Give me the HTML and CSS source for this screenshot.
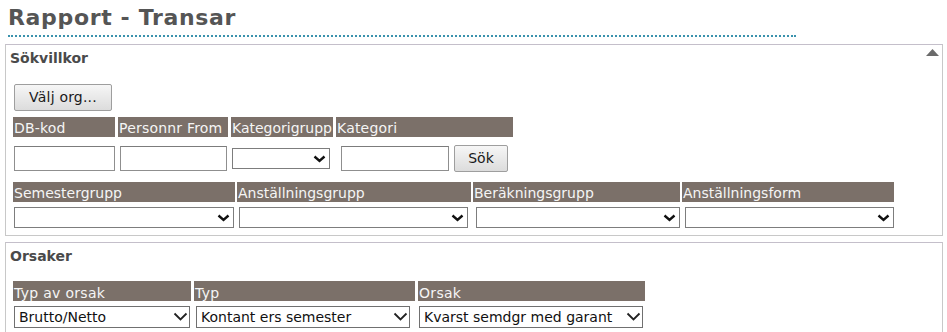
FILE: index.html
```html
<!DOCTYPE html>
<html lang="sv">
<head>
<meta charset="utf-8">
<title>Rapport - Transar</title>
<link rel="stylesheet" href="styles.css">
</head>
<body>
<h1 class="page-title">Rapport - Transar</h1>

<section class="panel panel-search">
  <div class="legend">Sökvillkor</div>
  <span class="collapse" aria-label="Fäll ihop">
    <svg width="13" height="7" viewBox="0 0 13 7"><polygon points="0,7 6.5,0 13,7" fill="#6b6b6b"/></svg>
  </span>
  <button class="btn btn-org" type="button">Välj org...</button>

  <div class="row hd-row r1">
    <div class="hd hd-wide c1a">DB-kod</div>
    <div class="hd hd-wide c1b">Personnr From</div>
    <div class="hd c1c">Kategorigrupp</div>
    <div class="hd hd-wide c1d">Kategori</div>
  </div>
  <div class="row in-row r1">
    <div class="cell c1a"><input class="txt w-db" type="text"></div>
    <div class="cell c1b"><input class="txt w-pnr" type="text"></div>
    <div class="cell c1c"><span class="sel w-kg"><select></select><svg class="chev" width="13" height="8" viewBox="0 0 13 8"><polyline points="1.5,1.5 6.5,6 11.5,1.5" fill="none" stroke="#111" stroke-width="2.4"/></svg></span></div>
    <div class="cell c1d"><input class="txt w-kat" type="text"><button class="btn btn-sok" type="button">Sök</button></div>
  </div>

  <div class="row hd-row2 r2">
    <div class="hd c2a">Semestergrupp</div>
    <div class="hd c2b">Anställningsgrupp</div>
    <div class="hd c2c">Beräkningsgrupp</div>
    <div class="hd c2d">Anställningsform</div>
  </div>
  <div class="row sel-row r2">
    <div class="cell c2a"><span class="sel w-sem"><select></select><svg class="chev" width="13" height="8" viewBox="0 0 13 8"><polyline points="1.5,1.5 6.5,6 11.5,1.5" fill="none" stroke="#111" stroke-width="2.4"/></svg></span></div>
    <div class="cell c2b"><span class="sel w-ang"><select></select><svg class="chev" width="13" height="8" viewBox="0 0 13 8"><polyline points="1.5,1.5 6.5,6 11.5,1.5" fill="none" stroke="#111" stroke-width="2.4"/></svg></span></div>
    <div class="cell c2c"><span class="sel w-ber"><select></select><svg class="chev" width="13" height="8" viewBox="0 0 13 8"><polyline points="1.5,1.5 6.5,6 11.5,1.5" fill="none" stroke="#111" stroke-width="2.4"/></svg></span></div>
    <div class="cell c2d"><span class="sel w-anf"><select></select><svg class="chev" width="13" height="8" viewBox="0 0 13 8"><polyline points="1.5,1.5 6.5,6 11.5,1.5" fill="none" stroke="#111" stroke-width="2.4"/></svg></span></div>
  </div>
</section>

<section class="panel panel-reasons">
  <div class="legend">Orsaker</div>
  <div class="row hd-row3 r3">
    <div class="hd hd-low c3a">Typ av orsak</div>
    <div class="hd hd-low c3b">Typ</div>
    <div class="hd hd-low c3c">Orsak</div>
  </div>
  <div class="row sel-row3 r3">
    <div class="cell c3a"><span class="sel sel-val w-typo"><select><option>Brutto/Netto</option></select><svg class="chev chev-thin" width="15" height="9" viewBox="0 0 15 9"><polyline points="1.5,1.5 7.5,7.5 13.5,1.5" fill="none" stroke="#222" stroke-width="1.8"/></svg></span></div>
    <div class="cell c3b"><span class="sel sel-val w-typ"><select><option>Kontant ers semester</option></select><svg class="chev chev-thin" width="15" height="9" viewBox="0 0 15 9"><polyline points="1.5,1.5 7.5,7.5 13.5,1.5" fill="none" stroke="#222" stroke-width="1.8"/></svg></span></div>
    <div class="cell c3c"><span class="sel sel-val w-ors"><select><option>Kvarst semdgr med garant</option></select><svg class="chev chev-thin" width="15" height="9" viewBox="0 0 15 9"><polyline points="1.5,1.5 7.5,7.5 13.5,1.5" fill="none" stroke="#222" stroke-width="1.8"/></svg></span></div>
  </div>
</section>
</body>
</html>
```

FILE: styles.css
```css
* { box-sizing: border-box; }

html, body {
  margin: 0;
  padding: 0;
  background: #ffffff;
}

body {
  font-family: "DejaVu Sans", Verdana, sans-serif;
  font-size: 14px;
  color: #222;
  width: 947px;
  overflow: hidden;
}

.page-title {
  margin: 0 0 0 8px;
  width: 788px;
  padding: 5px 0 4px 0;
  font-size: 22px;
  line-height: 26px;
  font-weight: bold;
  letter-spacing: 0.65px;
  color: #555555;
  border-bottom: 2px dotted #3a92ad;
}

.panel {
  position: relative;
  margin: 7px 0 0 5px;
  width: 938px;
  border: 1px solid #c8c8c8;
  border-top-color: #c4bfca;
  padding: 5px 0 7px 7px;
}

.panel-reasons {
  margin-top: 6px;
  padding-bottom: 10px;
}

.legend {
  margin-left: -3px;
  font-weight: bold;
  font-size: 14px;
  line-height: 17px;
  color: #4a4a4a;
}

.collapse {
  position: absolute;
  top: 4px;
  right: 3px;
  display: block;
  width: 13px;
  height: 7px;
  line-height: 0;
}

.btn {
  font-family: "DejaVu Sans", Verdana, sans-serif;
  font-size: 14px;
  color: #1a1a1a;
  background: linear-gradient(#f6f6f6, #dcdcdc);
  border: 1px solid #9e9e9e;
  border-radius: 2px;
  padding: 0;
  height: 27px;
  line-height: 25px;
  text-align: center;
}

.btn-org {
  display: block;
  margin: 17px 0 0 1px;
  width: 98px;
  letter-spacing: 0.2px;
}

.btn-sok {
  width: 54px;
  margin-left: 5px;
}

.row {
  display: flex;
}

.r1 { column-gap: 3px; }
.r2 { column-gap: 2px; }
.r3 { column-gap: 3px; }

.hd {
  background: #7b7069;
  color: #f5f5f5;
  height: 20px;
  line-height: 20px;
  padding: 1px 0 0 1px;
  white-space: nowrap;
}

.hd-wide { letter-spacing: 0.2px; }
.hd-low { padding-top: 2px; letter-spacing: 0.3px; }

.hd-row { margin-top: 6px; }
.in-row { margin-top: 8px; height: 27px; align-items: center; }
.hd-row2 { margin-top: 10px; }
.sel-row { margin-top: 5px; }
.hd-row3 { margin-top: 16px; }
.sel-row3 { margin-top: 5px; }

.cell {
  display: flex;
  align-items: center;
}

.c1a { width: 102px; }
.c1b { width: 110px; }
.c1c { width: 102px; }
.c1d { width: 177px; }

.c2a { width: 222px; }
.c2b { width: 234px; }
.c2c { width: 207px; }
.c2d { width: 212px; }

.c3a { width: 178px; }
.c3b { width: 221px; }
.c3c { width: 227px; }

.txt {
  height: 25px;
  border: 1px solid #8f8f8f;
  border-top-color: #7c7c7c;
  background: #fff;
  padding: 0 3px;
  font-family: "DejaVu Sans", Verdana, sans-serif;
  font-size: 14px;
  margin: 0;
}

.w-db  { width: 101px; margin-left: 1px; }
.w-pnr { width: 107px; margin-left: 2px; }
.w-kat { width: 108px; margin-left: 5px; }

.sel {
  position: relative;
  display: block;
  height: 21px;
}

.sel select {
  appearance: none;
  -webkit-appearance: none;
  display: block;
  width: 100%;
  height: 100%;
  margin: 0;
  border: 1px solid #7d7d7d;
  border-radius: 0;
  background: #fff;
  padding: 0 20px 0 4px;
  font-family: "DejaVu Sans", Verdana, sans-serif;
  font-size: 14px;
  color: #111;
  line-height: 19px;
}

.chev {
  position: absolute;
  right: 4px;
  top: 7px;
  pointer-events: none;
}

.chev-thin {
  right: 2px;
  top: 6px;
}

.w-kg  { width: 98px;  margin-left: 1px; }
.w-sem { width: 220px; margin-left: 1px; }
.w-ang { width: 229px; margin-left: 2px; }
.w-ber { width: 204px; margin-left: 3px; }
.w-anf { width: 209px; margin-left: 3px; }

.sel-val { height: 22px; }
.sel-val select { border-color: #707070; }

.w-typo { width: 176px; margin-left: 1px; }
.w-typ  { width: 214px; margin-left: 2px; }
.w-ors  { width: 224px; margin-left: 1px; }
```
